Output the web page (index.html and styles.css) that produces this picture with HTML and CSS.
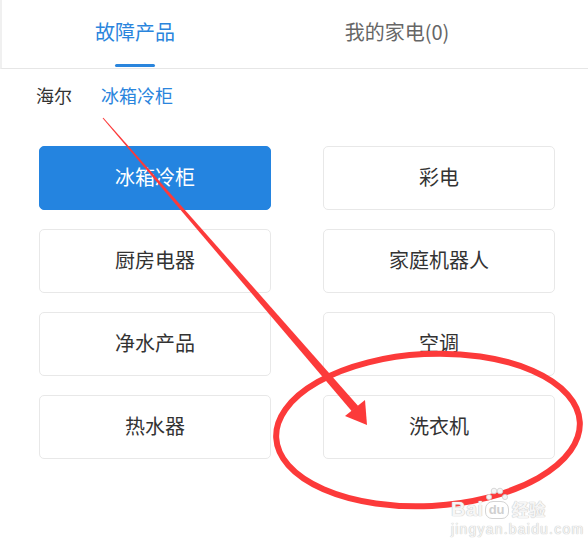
FILE: index.html
```html
<!DOCTYPE html>
<html lang="zh-CN">
<head>
  <meta charset="UTF-8">
  <title>故障产品</title>
  <link rel="stylesheet" href="styles.css">
</head>
<body>

  <!-- Tabs -->
  <div class="tabs">
    <div class="tab active">故障产品</div>
    <div class="tab">我的家电(0)</div>
  </div>

  <!-- Breadcrumb -->
  <div class="crumbs">
    <span class="crumb">海尔</span>
    <span class="crumb current">冰箱冷柜</span>
  </div>

  <!-- Category grid -->
  <div class="grid">
    <div class="cell selected">冰箱冷柜</div>
    <div class="cell">彩电</div>
    <div class="cell">厨房电器</div>
    <div class="cell">家庭机器人</div>
    <div class="cell">净水产品</div>
    <div class="cell">空调</div>
    <div class="cell">热水器</div>
    <div class="cell">洗衣机</div>
  </div>

  <!-- Annotation drawn over the screenshot -->
  <svg class="markup" width="588" height="549" viewBox="0 0 588 549">
    <ellipse cx="428" cy="430" rx="152" ry="76" transform="rotate(-3 428 430)"
             fill="none" stroke="#fc3a3a" stroke-width="6"/>
    <polygon points="102.6,118.3 103.4,117.7 358.2,406 351.8,411.2" fill="#fc3a3a"/>
    <polygon points="345,416 365,400 367,425" fill="#fc3a3a"/>
  </svg>

  <div class="watermark">
    <div class="wm-top">
      <span class="wm-bai">Bai</span>
      <span class="paw">
        <svg class="toes" width="22" height="14" viewBox="0 0 22 14">
          <circle cx="3" cy="10" r="2.6"/>
          <circle cx="8" cy="4" r="2.8"/>
          <circle cx="14" cy="4" r="2.8"/>
          <circle cx="19" cy="10" r="2.6"/>
        </svg>
        <span class="paw-du">du</span>
      </span>
      <span class="wm-jy">经验</span>
    </div>
    <div class="wm-url">jingyan.baidu.com</div>
  </div>

</body>
</html>
```

FILE: styles.css
```css
body {
  margin: 0;
  width: 588px;
  height: 549px;
  overflow: hidden;
  position: relative;
  background: #fff;
  font-family: "Noto Sans CJK SC", "Noto Sans", sans-serif;
  color: #333;
}

.tabs {
  display: flex;
  height: 68px;
  padding-left: 2px;
  border-bottom: 1px solid #e6e6e6;
  border-left: 2px solid #f0f0f0;
}

.tab {
  width: 262px;
  display: flex;
  justify-content: center;
  align-items: center;
  padding-bottom: 5px;
  font-size: 20px;
  color: #666;
  position: relative;
}

.tab.active {
  color: #2a85dd;
}

.tab.active::after {
  content: "";
  position: absolute;
  bottom: 1px;
  left: 50%;
  width: 40px;
  height: 3px;
  margin-left: -20px;
  border-radius: 2px;
  background: #2a85dd;
}

.crumbs {
  display: flex;
  gap: 29px;
  align-items: center;
  height: 52px;
  padding: 0 0 6px 36px;
  font-size: 18px;
}

.crumb {
  color: #333;
}

.crumb.current {
  color: #2a85dd;
}

.grid {
  display: grid;
  grid-template-columns: 232px 232px;
  grid-auto-rows: 64px;
  column-gap: 52px;
  row-gap: 19px;
  padding: 19px 0 0 39px;
}

.cell {
  display: flex;
  justify-content: center;
  align-items: center;
  padding-bottom: 3px;
  border: 1.5px solid #e8e8e8;
  border-radius: 5px;
  font-size: 20px;
  color: #333;
  box-sizing: border-box;
}

.cell.selected {
  background: #2484e0;
  border-color: #2484e0;
  color: #fff;
}

.markup {
  position: absolute;
  top: 0;
  left: 0;
  pointer-events: none;
}

.watermark {
  position: absolute;
  left: 451px;
  top: 486px;
  color: #f6f6f6;
  text-shadow: 0 0 1px #c4c4c4, 0 0 1px #c4c4c4;
  font-family: "Liberation Sans", sans-serif;
}

.wm-top {
  display: flex;
  align-items: flex-end;
  height: 33px;
}

.wm-bai {
  font-size: 20px;
  font-weight: bold;
  line-height: 20px;
  letter-spacing: 0.5px;
}

.paw {
  display: flex;
  flex-direction: column;
  align-items: center;
  width: 24px;
  margin: 0 3px 0 1px;
}

.toes {
  fill: #f6f6f6;
  stroke: #cfcfcf;
  stroke-width: 0.8;
}

.paw-du {
  font-size: 13px;
  font-weight: bold;
  line-height: 16px;
  padding: 0 3px;
  border: 1px solid #d4d4d4;
  border-radius: 8px 8px 7px 7px;
  text-shadow: none;
  color: #d0d0d0;
}

.wm-jy {
  font-family: "Noto Sans CJK SC", sans-serif;
  font-size: 17px;
  line-height: 20px;
  font-weight: bold;
}

.wm-url {
  margin-top: 2px;
  font-size: 14px;
  line-height: 16px;
  letter-spacing: 1.2px;
}
```
